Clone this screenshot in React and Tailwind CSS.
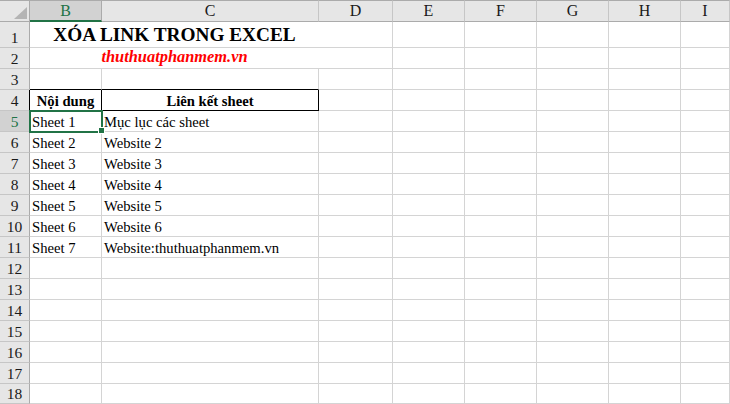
import React from "react";

const COLS = ["B", "C", "D", "E", "F", "G", "H", "I"];

const DATA = {
  5: ["Sheet 1", "Mục lục các sheet"],
  6: ["Sheet 2", "Website 2"],
  7: ["Sheet 3", "Website 3"],
  8: ["Sheet 4", "Website 4"],
  9: ["Sheet 5", "Website 5"],
  10: ["Sheet 6", "Website 6"],
  11: ["Sheet 7", "Website:thuthuatphanmem.vn"],
};

const RIGHT = { gray: "border-r-[#d4d4d4]", black: "border-r-black" };
const BOTTOM = { gray: "border-b-[#d4d4d4]", black: "border-b-black" };

function Cell({ r = "gray", b = "gray", className = "", children }) {
  return (
    <div
      className={`border-r border-b ${RIGHT[r]} ${BOTTOM[b]} flex items-end overflow-visible whitespace-nowrap leading-[normal] font-['Liberation_Serif',serif] ${className}`}
    >
      {children}
    </div>
  );
}

function RowHeader({ n, selected, blackRight }) {
  return (
    <div
      className={`border-r border-b border-b-[#c6c6c6] flex items-end justify-center leading-[normal] text-[15.5px] font-['Liberation_Serif',serif] ${
        blackRight ? "border-r-black" : "border-r-[#ababab]"
      } ${selected ? "bg-[#d2d2d2] text-[#217346]" : "bg-[#e6e6e6] text-[#1a1a1a]"}`}
    >
      {n}
    </div>
  );
}

export default function App() {
  const rows = [];
  for (let n = 1; n <= 18; n++) {
    rows.push(n);
  }

  return (
    <div className="w-[730px] h-[404px] overflow-hidden bg-white font-['Liberation_Serif',serif] text-black">
      <div className="grid grid-cols-[30px_72px_217px_74px_72px_72px_72px_72px_49px] grid-rows-[22px_26px_repeat(16,21px)_20px] w-[730px] h-[404px]">
        {/* Corner */}
        <div className="bg-[#e6e6e6] border-t border-r border-b border-[#ababab] flex items-end justify-end pr-[2px] pb-[2px]">
          <svg width="13" height="12" viewBox="0 0 13 12">
            <polygon points="13,0 13,12 0,12" fill="#b4b4b4" />
          </svg>
        </div>
        {/* Column headers */}
        {COLS.map((c) =>
          c === "B" ? (
            <div
              key={c}
              className="bg-[#d2d2d2] border-t border-t-[#ababab] border-r border-r-[#ababab] border-b-2 border-b-[#217346] flex items-center justify-center text-[16px] text-[#217346] leading-none font-['Liberation_Serif',serif]"
            >
              {c}
            </div>
          ) : (
            <div
              key={c}
              className="bg-[#e6e6e6] border-t border-t-[#ababab] border-r border-r-[#c6c6c6] border-b border-b-[#ababab] flex items-center justify-center text-[16px] text-[#1a1a1a] leading-none font-['Liberation_Serif',serif]"
            >
              {c}
            </div>
          )
        )}

        {rows.map((n) => {
          const header = (
            <RowHeader key={`h${n}`} n={n} selected={n === 5} blackRight={n === 4} />
          );

          if (n === 1 || n === 2) {
            return (
              <React.Fragment key={n}>
                {header}
                <Cell className="col-span-3">
                  <div className="w-[289px] flex justify-center pb-[1px]">
                    {n === 1 ? (
                      <span className="font-bold text-[19.3px]">XÓA LINK TRONG EXCEL</span>
                    ) : (
                      <span className="font-bold italic text-[16.4px] text-[#ff0000]">
                        thuthuatphanmem.vn
                      </span>
                    )}
                  </div>
                </Cell>
                {["E", "F", "G", "H", "I"].map((c) => (
                  <Cell key={c} />
                ))}
              </React.Fragment>
            );
          }

          if (n === 3) {
            return (
              <React.Fragment key={n}>
                {header}
                <Cell b="black" />
                <Cell b="black" />
                {["D", "E", "F", "G", "H", "I"].map((c) => (
                  <Cell key={c} />
                ))}
              </React.Fragment>
            );
          }

          if (n === 4) {
            return (
              <React.Fragment key={n}>
                {header}
                <Cell r="black" b="black" className="justify-center text-[14.67px] font-bold">
                  Nội dung
                </Cell>
                <Cell r="black" b="black" className="justify-center text-[14.67px] font-bold">
                  Liên kết sheet
                </Cell>
                {["D", "E", "F", "G", "H", "I"].map((c) => (
                  <Cell key={c} />
                ))}
              </React.Fragment>
            );
          }

          const d = DATA[n];
          return (
            <React.Fragment key={n}>
              {header}
              <Cell className="relative pl-[2px] text-[14.67px]">
                {d ? d[0] : null}
                {n === 5 && (
                  <>
                    <div className="absolute left-[-1px] top-[-1px] w-[74px] h-[23px] border-2 border-[#217346] z-10 pointer-events-none" />
                    <div className="absolute left-[68px] top-[16px] w-[7px] h-[7px] bg-[#217346] border border-white z-20" />
                  </>
                )}
              </Cell>
              <Cell className="pl-[2px] text-[14.67px]">{d ? d[1] : null}</Cell>
              {["D", "E", "F", "G", "H", "I"].map((c) => (
                <Cell key={c} />
              ))}
            </React.Fragment>
          );
        })}
      </div>
    </div>
  );
}
